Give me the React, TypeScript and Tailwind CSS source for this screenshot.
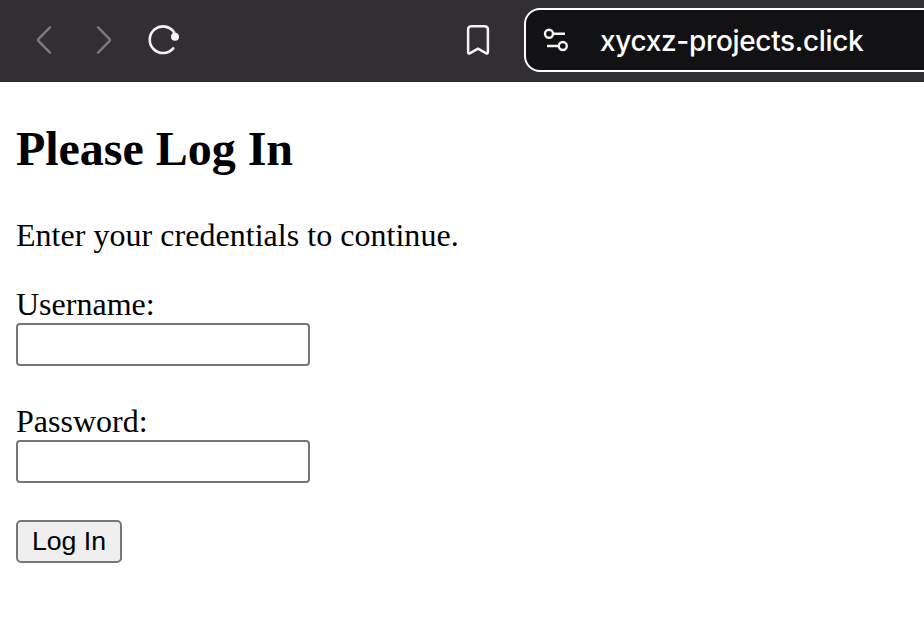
function BrowserBar() {
  return (
    <header className="flex h-[82px] items-start overflow-hidden border-b border-[#29282b] bg-[#312f34] text-[#f4f4f5]">
      <nav className="flex h-[81px] w-[524px] shrink-0 items-center">
        <svg className="h-full w-[524px]" viewBox="0 0 524 81" fill="none" strokeLinecap="round" strokeLinejoin="round">
          <path d="M50 27.300 38.600 38.900q-1.100 1.100 0 2.200L50 52.700" stroke="#7b797d" strokeWidth="2.500" />
          <path d="M98 27.300 109.400 38.900q1.100 1.100 0 2.200L98 52.700" stroke="#7b797d" strokeWidth="2.500" />
          <path d="M173.200 48.300A13.300 13.300 0 1 1 174.200 32.500" stroke="currentColor" strokeWidth="2.600" />
          <circle cx="175" cy="36.800" r="4" fill="currentColor" />
          <path d="M471.500 26.200h13q3.400 0 3.400 3.400v22.200q0 2.500-2.100 1.300L478 48.700l-7.800 4.400q-2.100 1.200-2.100-1.300V29.600q0-3.400 3.400-3.400Z" stroke="currentColor" strokeWidth="2.500" />
        </svg>
      </nav>
      <div className="mt-2 flex h-16 w-[420px] shrink-0 items-center rounded-2xl border-2 border-white bg-[#121214] pl-4">
        <svg className="h-7 w-7 shrink-0" viewBox="0 0 28 28" fill="none" stroke="#f4f4f5" strokeWidth="2.400">
          <circle cx="7" cy="7.800" r="4" />
          <path d="M11 7.800H23M5 20h11.800" />
          <circle cx="20.800" cy="20" r="4" />
        </svg>
        <span className="ml-[30px] whitespace-nowrap pt-0.5 font-['Inter',sans-serif] text-[28px] leading-9 font-medium tracking-[-0.33px] text-white">
          xycxz-projects.click
        </span>
      </div>
    </header>
  );
}

function Field({ label, type }: { label: string; type: string }) {
  return (
    <label className="block text-[32px] leading-[37px]">
      <span className="block">{label}</span>
      <input type={type} className="block h-[43px] w-[294px] rounded-[4px] border-2 border-[#767676] bg-white px-1 outline-none" />
    </label>
  );
}

export default function App() {
  return (
    <div className="h-[634px] overflow-hidden bg-white text-black">
      <BrowserBar />
      <main className="px-4 pt-[39px] font-['Liberation_Serif',serif]">
        <h2 className="text-5xl leading-[56px] font-bold tracking-[-0.03px]">Please Log In</h2>
        <p className="mt-10 text-[32px] leading-[37px] tracking-[0.03px]">Enter your credentials to continue.</p>
        <form className="mt-8 flex flex-col items-start" onSubmit={(event) => event.preventDefault()}>
          <div className="flex flex-col gap-[37px]">
            <Field label="Username:" type="text" />
            <Field label="Password:" type="password" />
          </div>
          <button type="submit" className="mt-[37px] h-[43px] w-[106px] rounded-[5px] border-2 border-[#767676] bg-[#efefef] font-['Liberation_Sans',sans-serif] text-[26.670px] leading-[37px]">
            Log In
          </button>
        </form>
      </main>
    </div>
  );
}
